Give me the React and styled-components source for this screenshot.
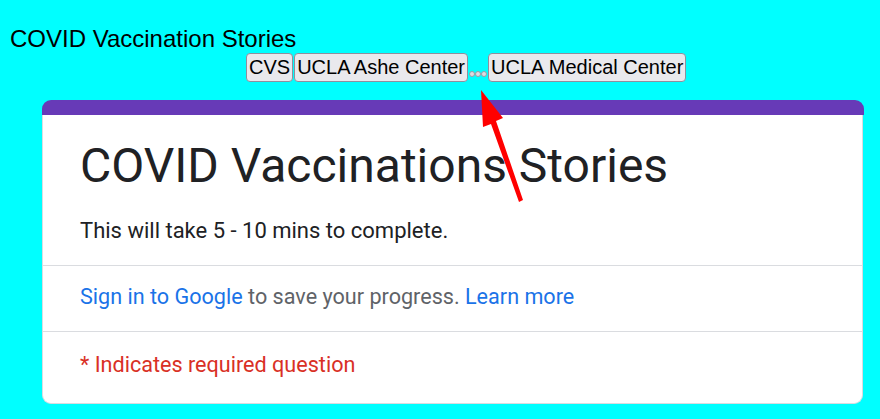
import React from "react";
import styled, { createGlobalStyle } from "styled-components";

const Global = createGlobalStyle`
  html, body { margin: 0; padding: 0; background: #00ffff; }
  body { font-family: "Liberation Sans", Arial, sans-serif; }
`;

const Page = styled.div`
  position: relative;
  width: 880px;
  height: 419px;
  overflow: hidden;
  background: #00ffff;
`;

const PageTitle = styled.div`
  font-family: "Liberation Sans", Arial, sans-serif;
  font-size: 24px;
  line-height: 27px;
  color: #000;
  padding: 25px 0 0 10px;
`;

const Crumbs = styled.div`
  display: flex;
  align-items: flex-end;
  gap: 1px;
  margin: 1px 0 0 246px;
  height: 29px;
`;

const Crumb = styled.button`
  font-family: "Liberation Sans", Arial, sans-serif;
  font-size: 20px;
  line-height: 23px;
  color: #000;
  background: #e9e9ed;
  border: 1px solid #8f8f9d;
  border-radius: 4px;
  padding: 2px 2px 2px 2px;
  margin: 0;
  height: 29px;
`;

const Dots = styled.div`
  display: flex;
  gap: 0px;
  padding: 0 0 5px 0;
`;

const Dot = styled.span`
  width: 6px;
  height: 6px;
  border-radius: 50%;
  background: #dcdce2;
  border: 1px solid #9a9ca6;
  box-sizing: border-box;
`;

const Card = styled.div`
  margin: 18px 17px 0 42px;
  width: 822px;
`;

const CardBar = styled.div`
  height: 15px;
  background: #673ab7;
  border-radius: 9px 9px 0 0;
`;

const CardBody = styled.div`
  background: #fff;
  border: 1px solid #dadce0;
  border-top: none;
  border-radius: 0 0 9px 9px;
  margin-right: 1px;
`;

const Section = styled.div`
  padding: ${(p) => p.$pad};
  border-top: ${(p) => (p.$divider ? "1px solid #dadce0" : "none")};
`;

const FormTitle = styled.div`
  font-family: Roboto, "Noto Sans", sans-serif;
  font-size: 48px;
  line-height: 56px;
  color: #202124;
`;

const Description = styled.div`
  font-family: Roboto, "Noto Sans", sans-serif;
  font-size: 22px;
  line-height: 28px;
  color: #202124;
  margin-top: 23px;
`;

const Line = styled.div`
  font-family: Roboto, "Noto Sans", sans-serif;
  font-size: 21.6px;
  line-height: 26px;
  color: ${(p) => p.$color || "#5f6368"};
`;

const Link = styled.a`
  color: #1a73e8;
  text-decoration: none;
`;

const Arrow = styled.svg`
  position: absolute;
  left: 0;
  top: 0;
  pointer-events: none;
`;

export default function App() {
  return (
    <Page>
      <Global />
      <PageTitle>COVID Vaccination Stories</PageTitle>
      <Crumbs>
        <Crumb>CVS</Crumb>
        <Crumb>UCLA Ashe Center</Crumb>
        <Dots>
          <Dot />
          <Dot />
          <Dot />
        </Dots>
        <Crumb>UCLA Medical Center</Crumb>
      </Crumbs>
      <Card>
        <CardBar />
        <CardBody>
          <Section $pad="23px 37px 20px">
            <FormTitle>COVID Vaccinations Stories</FormTitle>
            <Description>This will take 5 - 10 mins to complete.</Description>
          </Section>
          <Section $divider $pad="18px 37px 21px">
            <Line>
              <Link href="#">Sign in to Google</Link> to save your progress.{" "}
              <Link href="#">Learn more</Link>
            </Line>
          </Section>
          <Section $divider $pad="20px 37px 25px">
            <Line $color="#d93025">* Indicates required question</Line>
          </Section>
        </CardBody>
      </Card>
      <Arrow width="880" height="419" viewBox="0 0 880 419">
        <polygon
          points="481,90 503,118 496,121 523,200 519,202 491,124 483,127"
          fill="#ff0000"
        />
      </Arrow>
    </Page>
  );
}
